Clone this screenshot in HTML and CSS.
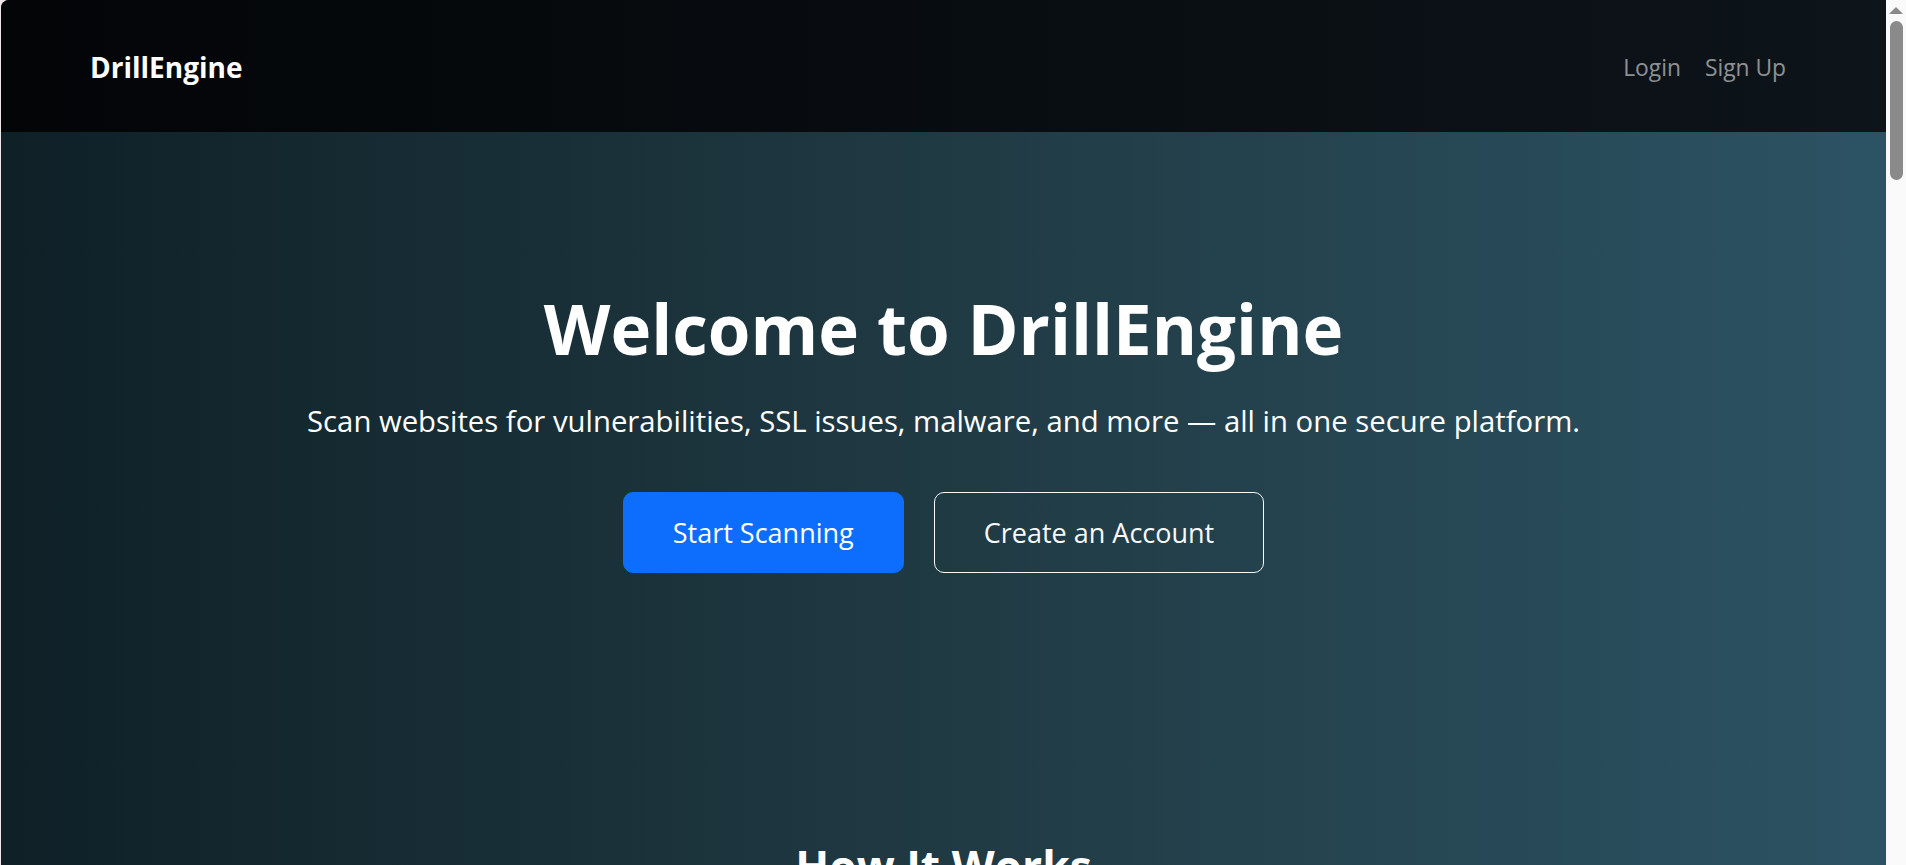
FILE: index.html
```html
<!DOCTYPE html>
<html lang="en">
<head>
<meta charset="utf-8">
<title>DrillEngine</title>
<link rel="stylesheet" href="styles.css">
</head>
<body>
<div class="page">
  <header class="topbar">
    <a class="brand" href="#">DrillEngine</a>
    <nav class="nav">
      <a class="nav-link" href="#">Login</a>
      <a class="nav-link" href="#">Sign Up</a>
    </nav>
  </header>
  <main class="main">
    <section class="hero">
      <h1 class="hero-title">Welcome to DrillEngine</h1>
      <p class="hero-lead">Scan websites for vulnerabilities, SSL issues, malware, and more — all in one secure platform.</p>
      <div class="hero-actions">
        <a class="btn btn-primary" href="#">Start Scanning</a>
        <a class="btn btn-outline" href="#">Create an Account</a>
      </div>
    </section>
    <section class="how">
      <h2 class="how-title">How It Works</h2>
      <div class="steps">
        <div class="step"><h3>1. Enter a URL</h3><p>Submit the website you want to check.</p></div>
        <div class="step"><h3>2. Run the Scan</h3><p>We test for vulnerabilities, SSL issues and malware.</p></div>
        <div class="step"><h3>3. Get the Report</h3><p>Review clear results and fix what matters.</p></div>
      </div>
    </section>
  </main>
</div>
<div class="scrollbar">
  <div class="scroll-arrow"></div>
  <div class="scroll-thumb"></div>
</div>
</body>
</html>
```
FILE: styles.css
```css
html, body {
  margin: 0;
  height: 100%;
}
body {
  display: flex;
  overflow: hidden;
  background: #efe6e6;
  font-family: "Open Sans", "Liberation Sans", sans-serif;
}
.page {
  flex: 1;
  margin-left: 1px;
  border-top-left-radius: 8px;
  overflow: hidden;
  display: flex;
  flex-direction: column;
  background: linear-gradient(to right, #0f2027, #203a43, #2c5364);
}
.topbar {
  flex: none;
  height: 132px;
  box-sizing: border-box;
  display: flex;
  align-items: center;
  justify-content: space-between;
  padding: 0 100px 0 89px;
  background: linear-gradient(to right, #030507, #0d141a);
}
.brand {
  font-size: 28px;
  font-weight: 700;
  line-height: 1.5;
  color: #fff;
  text-decoration: none;
  padding-top: 2px;
}
.nav {
  display: flex;
  gap: 24px;
  padding-top: 5px;
}
.nav-link {
  font-size: 22.8px;
  line-height: 1.5;
  color: rgba(255, 255, 255, 0.55);
  text-decoration: none;
}
.main {
  flex: 1;
  color: #fff;
}
.hero {
  padding: 155px 0 155px;
  text-align: center;
}
.hero-title {
  margin: 0;
  font-size: 69px;
  font-weight: 700;
  line-height: 1.2;
}
.hero-lead {
  margin: 30px 0 0;
  font-size: 29.3px;
  line-height: 1.5;
}
.hero-actions {
  margin-top: 48px;
  display: flex;
  justify-content: center;
  gap: 30px;
}
.btn {
  display: inline-block;
  padding: 19px 49px;
  border: 1px solid transparent;
  border-radius: 10px;
  font-size: 27px;
  line-height: 41px;
  text-decoration: none;
}
.btn-primary {
  background: #0d6efd;
  border-color: #0d6efd;
  color: #fff;
}
.btn-outline {
  border-color: #f8f9fa;
  color: #f8f9fa;
}
.how {
  padding-top: 112px;
  text-align: center;
}
.how-title {
  margin: 0;
  font-size: 44.4px;
  font-weight: 700;
  line-height: 1.2;
}
.steps {
  display: flex;
  justify-content: center;
  gap: 30px;
  margin-top: 50px;
}
.step {
  width: 400px;
  padding: 30px;
  border-radius: 10px;
  background: rgba(255, 255, 255, 0.06);
}
.scrollbar {
  flex: none;
  width: 20px;
  background: #fafafa;
  display: flex;
  flex-direction: column;
  align-items: center;
}
.scroll-arrow {
  margin-top: 7px;
  width: 0;
  height: 0;
  border-left: 7px solid transparent;
  border-right: 7px solid transparent;
  border-bottom: 7px solid #8a8a8a;
}
.scroll-thumb {
  margin-top: 7px;
  width: 13px;
  height: 159px;
  border-radius: 7px;
  background: #8a8a8a;
}
```
